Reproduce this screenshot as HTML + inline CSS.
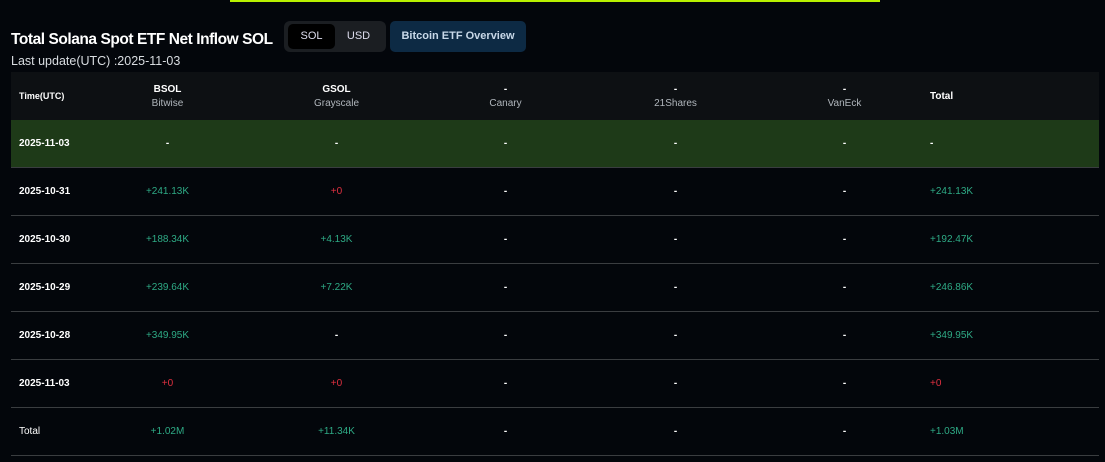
<!DOCTYPE html>
<html><head><style>
*{margin:0;padding:0;box-sizing:border-box}
body{width:1105px;height:462px;background:#03060b;font-family:"Liberation Sans",sans-serif;position:relative;overflow:hidden;color:#fff}
.bar{position:absolute;left:230px;top:0;width:650px;height:2px;background:#b8f000}
.title{position:absolute;left:11px;top:31px;font-size:15.5px;font-weight:bold;letter-spacing:-0.45px;white-space:nowrap}
.sub{position:absolute;left:11px;top:54px;font-size:12.5px;color:#d8dce0}
.tog{position:absolute;left:284px;top:21px;width:102px;height:31px;background:#1b1e22;border-radius:6px}
.sol{position:absolute;left:4px;top:3px;width:47px;height:25px;background:#000;border-radius:5px;color:#dde;font-size:11px;text-align:center;line-height:25px}
.usd{position:absolute;left:51px;top:3px;width:47px;height:25px;color:#dde;font-size:11px;text-align:center;line-height:25px}
.btn{position:absolute;left:390px;top:21px;width:136px;height:31px;background:#0d2a44;border-radius:5px;color:#c8d8e8;font-size:11px;font-weight:bold;text-align:center;line-height:31px}
.hd{position:absolute;left:11px;top:72px;width:1088px;height:48px;background:#0d1013}
.row{position:absolute;left:11px;width:1088px;height:48px;border-bottom:1px solid #3a3d40}
.c{position:absolute;top:0;height:100%;display:flex;flex-direction:column;justify-content:center;font-size:10px;text-align:center;width:169px}
.g{color:#2eaa85}.r{color:#e03040}.w{color:#fff;font-weight:bold}
.d{position:absolute;left:8px;top:0;height:100%;display:flex;align-items:center;font-size:10px;font-weight:bold}
.t{position:absolute;left:919px;top:0;height:100%;display:flex;align-items:center;font-size:10px}
.s{color:#b0b6bc;margin-top:3px;font-weight:normal}
</style></head><body>
<div class="bar"></div>
<div class="title">Total Solana Spot ETF Net Inflow SOL</div>
<div class="sub">Last update(UTC) :2025-11-03</div>
<div class="tog"><div class="sol">SOL</div><div class="usd">USD</div></div>
<div class="btn">Bitcoin ETF Overview</div>
<div class="hd">
<div class="d" style="font-size:9px">Time(UTC)</div>
<div class="c" style="left:72px"><b>BSOL</b><span class="s">Bitwise</span></div>
<div class="c" style="left:241px"><b>GSOL</b><span class="s">Grayscale</span></div>
<div class="c" style="left:410px"><b>-</b><span class="s">Canary</span></div>
<div class="c" style="left:580px"><b>-</b><span class="s">21Shares</span></div>
<div class="c" style="left:749px"><b>-</b><span class="s">VanEck</span></div>
<div class="t" style="font-weight:bold">Total</div>
</div>
<div class="row" style="top:120px;background:#1e3a18">
<div class="d">2025-11-03</div>
<div class="c w" style="left:72px">-</div><div class="c w" style="left:241px">-</div><div class="c w" style="left:410px">-</div><div class="c w" style="left:580px">-</div><div class="c w" style="left:749px">-</div><div class="t w">-</div></div>
<div class="row" style="top:168px">
<div class="d">2025-10-31</div>
<div class="c g" style="left:72px">+241.13K</div><div class="c r" style="left:241px">+0</div><div class="c w" style="left:410px">-</div><div class="c w" style="left:580px">-</div><div class="c w" style="left:749px">-</div><div class="t g">+241.13K</div></div>
<div class="row" style="top:216px">
<div class="d">2025-10-30</div>
<div class="c g" style="left:72px">+188.34K</div><div class="c g" style="left:241px">+4.13K</div><div class="c w" style="left:410px">-</div><div class="c w" style="left:580px">-</div><div class="c w" style="left:749px">-</div><div class="t g">+192.47K</div></div>
<div class="row" style="top:264px">
<div class="d">2025-10-29</div>
<div class="c g" style="left:72px">+239.64K</div><div class="c g" style="left:241px">+7.22K</div><div class="c w" style="left:410px">-</div><div class="c w" style="left:580px">-</div><div class="c w" style="left:749px">-</div><div class="t g">+246.86K</div></div>
<div class="row" style="top:312px">
<div class="d">2025-10-28</div>
<div class="c g" style="left:72px">+349.95K</div><div class="c w" style="left:241px">-</div><div class="c w" style="left:410px">-</div><div class="c w" style="left:580px">-</div><div class="c w" style="left:749px">-</div><div class="t g">+349.95K</div></div>
<div class="row" style="top:360px">
<div class="d">2025-11-03</div>
<div class="c r" style="left:72px">+0</div><div class="c r" style="left:241px">+0</div><div class="c w" style="left:410px">-</div><div class="c w" style="left:580px">-</div><div class="c w" style="left:749px">-</div><div class="t r">+0</div></div>
<div class="row" style="top:408px">
<div class="d" style="font-weight:normal">Total</div>
<div class="c g" style="left:72px">+1.02M</div><div class="c g" style="left:241px">+11.34K</div><div class="c w" style="left:410px">-</div><div class="c w" style="left:580px">-</div><div class="c w" style="left:749px">-</div><div class="t g">+1.03M</div></div>
</body></html>
